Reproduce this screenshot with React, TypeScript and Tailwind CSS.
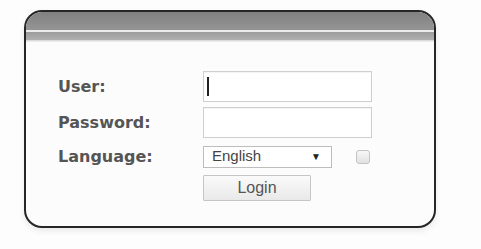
import React from 'react';

const labelCls = "font-['DejaVu_Sans',sans-serif] font-bold text-[16px] text-[#555] leading-none";

export default function App() {
  return (
    <div className="w-[481px] h-[249px] bg-[#fdfdfd] pt-[10px] pl-[24px]">
      <div className="w-[412px] h-[218px] rounded-[18px] border-2 border-[#262626] bg-[#fcfcfc] overflow-hidden shadow-[0_3px_6px_rgba(0,0,0,0.08)]">
        {/* header bar */}
        <div className="h-[18px] bg-gradient-to-b from-[#808080] to-[#959595]" />
        <div className="h-[2px] bg-[#ececec]" />
        <div className="h-[8px] bg-gradient-to-b from-[#9c9c9c] to-[#b0b0b0]" />
        <div className="h-[2px] bg-gradient-to-b from-[#d4d4d4] to-[#f2f2f2]" />

        {/* form */}
        <div className="grid grid-cols-[145px_auto] items-center gap-y-[5px] pl-[32px] pt-[29px] font-['Liberation_Sans',Arial,sans-serif]">
          <span className={labelCls}>User:</span>
          <div className="w-[169px] h-[31px] border border-[#cfcfcf] bg-white flex items-center pl-[3px] shadow-[inset_0_1px_1px_rgba(0,0,0,0.05)]">
            <div className="w-[2px] h-[19px] bg-[#222]" />
          </div>

          <span className={labelCls}>Password:</span>
          <div className="w-[169px] h-[31px] border border-[#cfcfcf] bg-white shadow-[inset_0_1px_1px_rgba(0,0,0,0.05)]" />

          <span className={labelCls}>Language:</span>
          <div className="flex items-center h-[27px]">
            <div className="w-[129px] h-[22px] border border-[#bdbdbd] bg-white flex items-center justify-between pl-[8px] pr-[10px] text-[15px] text-[#444]">
              <span>English</span>
              <span className="text-[10px] text-[#222]">▼</span>
            </div>
            <div className="ml-[24px] w-[14px] h-[14px] rounded-[3px] border border-[#c4c4c4] bg-gradient-to-b from-[#f7f7f7] to-[#e2e2e2]" />
          </div>

          <span />
          <button className="w-[108px] h-[26px] border border-[#c6c6c6] bg-gradient-to-b from-[#fafafa] to-[#e9e9e9] text-[16px] text-[#555] rounded-[1px] cursor-pointer">
            Login
          </button>
        </div>
      </div>
    </div>
  );
}
